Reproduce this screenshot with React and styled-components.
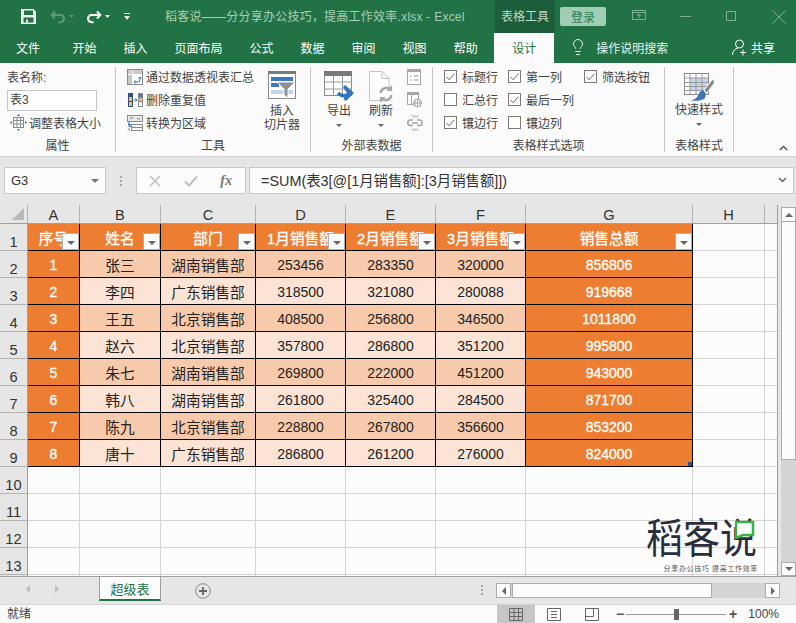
import React from 'react';
import styled, { createGlobalStyle } from 'styled-components';
import { Lightbulb } from 'lucide-react';

const GlobalStyle = createGlobalStyle`
  html, body {
    margin: 0;
    padding: 0;
    background: #e6e6e6;
  }
  * {
    box-sizing: border-box;
  }
`;

const uiFont = `"Liberation Sans", "Noto Sans CJK SC", sans-serif`;

const Window = styled.div`
  width: 796px;
  height: 623px;
  display: flex;
  flex-direction: column;
  overflow: hidden;
  background: #e6e6e6;
  font-family: ${uiFont};
  font-size: 12px;
  color: #444;
`;

/* title bar */
const TitleBar = styled.div`
  height: 33px;
  display: flex;
  align-items: center;
  background: #217346;
  color: #a9cfba;
  padding-left: 21px;
`;

const QuickIcon = styled.svg`
  display: block;
  flex: none;
  margin-right: ${p => p.$mr || 0}px;
`;

const TitleText = styled.div`
  width: 330px;
  margin-left: 35px;
  padding-bottom: 2px;
  white-space: nowrap;
  letter-spacing: 0.02em;
`;

const ContextTab = styled.div`
  width: 60px;
  height: 33px;
  padding-bottom: 2px;
  display: flex;
  align-items: center;
  justify-content: center;
  background: #1b5e39;
  color: #bcd8c8;
`;

const SignIn = styled.div`
  width: 46px;
  height: 19px;
  margin-left: 5px;
  margin-right: 26px;
  display: flex;
  align-items: center;
  justify-content: center;
  background: #a0cdb3;
  border-radius: 2px;
  color: #2f7d55;
`;

/* tab row */
const TabBar = styled.div`
  height: 30px;
  display: flex;
  align-items: center;
  background: #217346;
  color: #fff;
  padding: 0 0 2px 16px;
`;

const Tab = styled.div`
  padding: 0 13.5px;
  white-space: nowrap;
  &:first-child {
    padding: 0 19px 0 0;
  }
`;

const ActiveTab = styled.div`
  width: 60px;
  height: 30px;
  margin: 0 0 -2px 3px;
  display: flex;
  align-items: center;
  justify-content: center;
  background: #fbfbfb;
  color: #217346;
  padding-bottom: 2px;
`;

const SearchHint = styled.div`
  margin-left: 15px;
  display: flex;
  align-items: center;
  gap: 9px;
  color: #e8f1ec;
`;

const Share = styled.div`
  margin-left: auto;
  margin-right: 21px;
  display: flex;
  align-items: center;
  gap: 4px;
`;

/* ribbon */
const Ribbon = styled.div`
  height: 94px;
  display: flex;
  background: #fbfbfb;
  border-bottom: 1px solid #d2d2d2;
  position: relative;
`;

const Group = styled.div`
  width: ${p => p.$w}px;
  height: 93px;
  flex: none;
  display: flex;
  flex-direction: column;
`;

const GroupBody = styled.div`
  height: 73px;
  padding: 2px 0 0 ${p => p.$pl || 0}px;
  display: flex;
`;

const GroupLabel = styled.div`
  height: 20px;
  line-height: 20px;
  text-align: center;
  white-space: nowrap;
  color: #444;
`;

const Separator = styled.div`
  width: 1px;
  height: 85px;
  margin-top: 4px;
  flex: none;
  background: #c6c6c6;
`;

const Stack = styled.div`
  display: flex;
  flex-direction: column;
`;

const ToolRow = styled.div`
  height: 23px;
  display: flex;
  align-items: center;
  gap: ${p => p.$gap || 3}px;
  padding-left: ${p => p.$pl || 0}px;
  white-space: nowrap;
`;

const NameInput = styled.div`
  width: 90px;
  height: 21px;
  margin-top: 2px;
  padding-left: 2px;
  line-height: 19px;
  border: 1px solid #c6c6c6;
  background: #fff;
`;

const LargeButton = styled.div`
  width: ${p => p.$w || 42}px;
  margin-left: ${p => p.$ml || 0}px;
  display: flex;
  flex-direction: column;
  align-items: center;
  padding-top: ${p => p.$pt || 6}px;
  flex: none;
  line-height: 14px;
  white-space: nowrap;
  text-align: center;
`;

const LargeText = styled.div`
  margin-top: ${p => p.$mt || 2}px;
`;

const Caret = styled.div`
  width: 0;
  height: 0;
  margin-top: ${p => p.$mt || 6}px;
  border-left: 3px solid transparent;
  border-right: 3px solid transparent;
  border-top: 3px solid #666;
`;

const SmallIcons = styled.div`
  margin-left: 5px;
  display: flex;
  flex-direction: column;
`;

const SmallIconCell = styled.div`
  height: 23px;
  display: flex;
  align-items: center;
`;

const OptionGrid = styled.div`
  display: grid;
  grid-template-columns: 64px 76px auto;
  grid-auto-rows: 23px;
`;

const Option = styled.div`
  display: flex;
  align-items: center;
  gap: 5px;
  white-space: nowrap;
`;

const Box = styled.div`
  width: 13px;
  height: 13px;
  flex: none;
  border: 1px solid #7a7a7a;
  background: #fff;
  display: flex;
  align-items: center;
  justify-content: center;
`;

const CollapseIcon = styled.svg`
  position: absolute;
  right: 8px;
  bottom: 5px;
`;

/* formula bar */
const FormulaBand = styled.div`
  height: 48px;
  padding: 10px 2px 0 4px;
  display: flex;
  align-items: flex-start;
  flex: none;
`;

const NameBox = styled.div`
  width: 102px;
  height: 27px;
  padding: 0 6px 0 6px;
  display: flex;
  align-items: center;
  justify-content: space-between;
  background: #fcfcfc;
  border: 1px solid #c8c8c8;
  color: #333;
  font-size: 13px;
`;

const GripDots = styled.div`
  width: 30px;
  height: 27px;
  display: flex;
  align-items: center;
  justify-content: center;
`;

const Dots = styled.div`
  width: 2px;
  height: ${p => p.$h || 10}px;
  background-image: linear-gradient(#a8a8a8 50%, transparent 50%);
  background-size: 2px 4px;
`;

const FxBox = styled.div`
  width: 110px;
  height: 27px;
  padding: 0 13px 0 12px;
  display: flex;
  align-items: center;
  justify-content: space-between;
  background: #fcfcfc;
  border: 1px solid #c8c8c8;
`;

const FxMark = styled.span`
  font-family: "Liberation Serif", serif;
  font-style: italic;
  font-weight: bold;
  font-size: 14px;
  color: #777;
`;

const FormulaInput = styled.div`
  flex: 1;
  height: 27px;
  margin-left: 3px;
  padding: 0 6px 2px 11px;
  display: flex;
  align-items: center;
  justify-content: space-between;
  background: #fcfcfc;
  border: 1px solid #c8c8c8;
  font-size: 14.4px;
  color: #333;
`;

/* sheet */
const SheetArea = styled.div`
  height: 371px;
  display: flex;
  flex: none;
  position: relative;
`;

const SheetGrid = styled.div`
  width: 778px;
  height: 371px;
  flex: none;
  display: grid;
  grid-template-columns: 28px 52px 81px 95px 90px 90px 90px 167px 72px 13px;
  grid-template-rows: 19px repeat(14, 27px);
  overflow: hidden;
  border-right: 1px solid #9e9e9e;
`;

const Corner = styled.div`
  border-right: 1px solid #b4b4b4;
  border-bottom: 1px solid #9e9e9e;
  display: flex;
  align-items: flex-end;
  justify-content: flex-end;
  padding: 0 3px 3px 0;
`;

const ColHead = styled.div`
  border-right: 1px solid #b4b4b4;
  border-bottom: 1px solid #9e9e9e;
  display: flex;
  align-items: flex-end;
  justify-content: center;
  font-size: 14.67px;
  line-height: 15px;
  color: #333;
`;

const RowHead = styled.div`
  border-right: 1px solid #9e9e9e;
  border-bottom: 1px solid #b4b4b4;
  display: flex;
  align-items: flex-end;
  justify-content: center;
  font-size: 14.67px;
  line-height: 16px;
  color: #333;
`;

const cellBackground = {
  head: '#ed7d31',
  accent: '#ed7d31',
  dark: '#f7caac',
  light: '#fbe4d5',
  blank: '#fcfcfc',
};

const Cell = styled.div`
  position: relative;
  overflow: hidden;
  display: flex;
  align-items: center;
  justify-content: center;
  white-space: nowrap;
  background: ${p => cellBackground[p.$kind]};
  border-right: 1px solid ${p => (p.$kind === 'blank' ? '#d4d4d4' : '#000')};
  border-bottom: 1px solid ${p => (p.$kind === 'blank' ? '#d4d4d4' : '#000')};
  color: ${p => (p.$kind === 'dark' || p.$kind === 'light' ? '#222' : '#fff')};
  font-size: ${p => (p.$numeric ? 14 : 14.67)}px;
  -webkit-text-stroke: ${p => (p.$kind === 'head' || p.$kind === 'accent' ? '0.3px #fff' : '0')};
  padding-top: 1px;
`;

const FilterButton = styled.div`
  position: absolute;
  right: 0;
  bottom: 0;
  width: 17px;
  height: 17px;
  background: #fcfcfc;
  border: 1px solid #aab2ba;
  display: flex;
  flex-direction: column;
  align-items: center;
  justify-content: center;
`;

const FilterCaret = styled.div`
  width: 0;
  height: 0;
  margin-top: 2px;
  border-left: 4px solid transparent;
  border-right: 4px solid transparent;
  border-top: 4px solid #666;
`;

const ResizeHandle = styled.div`
  position: absolute;
  right: 0;
  bottom: 0;
  width: 4px;
  height: 4px;
  background: #2f4f9e;
`;

const Logo = styled.div`
  position: absolute;
  right: 38px;
  bottom: 3px;
  width: 112px;
  display: flex;
  flex-direction: column;
  align-items: flex-end;
  color: #2a2e3c;
`;

const LogoName = styled.div`
  width: 112px;
  height: 42px;
  line-height: 42px;
  font-size: 37px;
  font-weight: 400;
  white-space: nowrap;
  transform: scaleY(1.12);
  transform-origin: top;
`;

const LogoMark = styled.svg`
  position: absolute;
  right: 3px;
  top: 4px;
`;

const LogoSlogan = styled.div`
  margin-top: 6px;
  font-size: 7px;
  line-height: 9px;
  letter-spacing: 0.65px;
  white-space: nowrap;
  color: #555;
`;

/* scrollbars */
const VScroll = styled.div`
  width: 15px;
  margin: 2px 0 0 3px;
  flex: none;
  display: flex;
  flex-direction: column;
  background: #d4d4d4;
`;

const ScrollButton = styled.div`
  width: ${p => p.$w || 15}px;
  height: ${p => p.$h || 15}px;
  flex: none;
  display: flex;
  align-items: center;
  justify-content: center;
  background: #fcfcfc;
  border: 1px solid #ababab;
`;

const VThumb = styled.div`
  height: 238px;
  flex: none;
  background: #fcfcfc;
  border: 1px solid #ababab;
  border-top: none;
`;

const Arrow = styled.div`
  width: 0;
  height: 0;
  border-style: solid;
  border-color: transparent;
  border-width: ${p => p.$size || 4}px;
  ${p => `border-${p.$dir}-color: ${p.$color || '#666'};`}
  ${p => `border-${{ top: 'bottom', bottom: 'top', left: 'right', right: 'left' }[p.$dir]}-width: 0;`}
`;

const VSpacer = styled.div`
  flex: 1;
`;

/* sheet tabs */
const TabStrip = styled.div`
  height: 28px;
  flex: none;
  display: flex;
  border-top: 1px solid #9e9e9e;
`;

const NavArrows = styled.div`
  width: 99px;
  height: 24px;
  padding-left: 26px;
  display: flex;
  align-items: center;
  gap: 25px;
`;

const SheetTab = styled.div`
  width: 62px;
  height: 24px;
  display: flex;
  align-items: center;
  justify-content: center;
  background: #fcfcfc;
  border-left: 1px solid #9e9e9e;
  border-right: 1px solid #9e9e9e;
  border-bottom: 2px solid #217346;
  color: #217346;
  font-size: 13px;
`;

const AddSheet = styled.svg`
  margin: 6px 0 0 34px;
  flex: none;
`;

const HGrip = styled.div`
  margin: 8px 13px 0 auto;
`;

const HScroll = styled.div`
  margin: 6px 16px 0 0;
  width: 284px;
  height: 15px;
  display: flex;
  background: #d4d4d4;
`;

const HThumb = styled.div`
  width: 200px;
  height: 15px;
  background: #fcfcfc;
  border: 1px solid #ababab;
  margin-left: 1px;
`;

/* status bar */
const StatusBar = styled.div`
  flex: 1;
  display: flex;
  align-items: stretch;
  background: #fbfbfb;
  border-top: 1px solid #d4d4d4;
  padding: 0 17px 0 7px;
`;

const StatusText = styled.div`
  width: 490px;
  line-height: 18px;
`;

const ViewButton = styled.div`
  width: 38px;
  display: flex;
  align-items: center;
  justify-content: center;
  background: ${p => (p.$active ? '#c6c6c6' : 'transparent')};
`;

const ZoomControls = styled.div`
  width: 122px;
  margin-left: 5px;
  display: flex;
  align-items: center;
`;

const ZoomSign = styled.div`
  width: 8px;
  font-size: 14px;
  font-weight: bold;
  line-height: 18px;
  text-align: center;
  color: #555;
`;

const ZoomTrack = styled.div`
  position: relative;
  width: 100px;
  height: 1px;
  margin: 0 3px 0 2px;
  background: #9a9a9a;
`;

const ZoomThumb = styled.div`
  position: absolute;
  left: 48px;
  top: -5px;
  width: 5px;
  height: 11px;
  background: #666;
`;

const ZoomValue = styled.div`
  margin-left: auto;
  line-height: 18px;
  color: #444;
`;

/* icons */
const Save = () => (
  <QuickIcon width="15" height="15" viewBox="0 0 15 15" $mr={14}>
    <path fill="#eee" fillRule="evenodd" d="M0 0h12.5L15 2.5V15H0zM3 1.5v4.5h9V1.5zM2.5 8.500V13.500h10V8.500z" />
    <rect x="5" y="10.500" width="2" height="3" fill="#eee" />
  </QuickIcon>
);

const Undo = ({ color, flip, mr }) => (
  <QuickIcon width="16" height="14" viewBox="0 0 16 14" $mr={mr} style={flip ? { transform: 'scaleX(-1)' } : undefined}>
    <path fill="none" stroke={color} strokeWidth="2.200" d="M5 1.500 1.800 5 5 8.500M2.500 5H10a3.500 3.500 0 0 1 .8 7L8.500 12.500" />
  </QuickIcon>
);

const SmallDrop = ({ color, mr }) => (
  <QuickIcon width="5" height="3" viewBox="0 0 5 3" $mr={mr}>
    <path d="M0 0h5L2.500 3z" fill={color} />
  </QuickIcon>
);

const Customize = () => (
  <QuickIcon width="6" height="7" viewBox="0 0 6 7">
    <path d="M0 0h6v1H0zM0 3h6L3 7z" fill="#eee" />
  </QuickIcon>
);

const WindowIcons = () => (
  <svg width="156" height="16" viewBox="0 0 156 16" fill="none" stroke="#7fae94">
    <path d="M.5 1.500h13v9H.5zM.5 3.500h13M7 9V5M5 7l2-2 2 2" />
    <path d="M48 7.500h11" />
    <path d="M94.500 2.500h9v9h-9z" />
    <path d="M140.500 1.500l13 13M153.500 1.500l-13 13" />
  </svg>
);

const Person = () => (
  <svg width="15" height="17" viewBox="0 0 15 17" fill="none" stroke="#fff">
    <circle cx="7.500" cy="5" r="4" />
    <path d="M.5 16c0-4 2.500-6.500 5.500-7M11 10.500v6M8 13.500h6" />
  </svg>
);

const Pivot = () => (
  <svg width="16" height="16" viewBox="0 0 16 16" fill="none">
    <rect x=".5" y=".5" width="15" height="15" stroke="#8a8a8a" fill="#fff" />
    <path d="M1 1h4v4H1zM6 1h9v4H6zM1 6h4v9H1z" fill="#c9c9c9" />
    <path d="M7 13h4a2 2 0 0 0 2-2V8M11.500 9.500 13 8l1.500 1.500M8.500 11.500 7 13l1.500 1.500" stroke="#2f6fb5" />
  </svg>
);

const RemoveDup = () => (
  <svg width="16" height="16" viewBox="0 0 16 16">
    <rect x="1" y="1" width="5" height="14" fill="#2f4f7f" />
    <rect x="2" y="5" width="3" height="4" fill="#f3b779" />
    <rect x="2" y="10" width="3" height="4" fill="#f3b779" />
    <rect x="11" y="1" width="5" height="14" fill="#888" />
    <rect x="12" y="2" width="3" height="3" fill="#3f7cc0" />
    <rect x="12" y="6" width="3" height="3" fill="#f3b779" />
    <rect x="12" y="10" width="3" height="4" fill="#fff" />
    <path d="M7 8h2.500M8.500 6.500 10 8l-1.500 1.500" stroke="#2f6fb5" fill="none" />
  </svg>
);

const ToRange = () => (
  <svg width="16" height="16" viewBox="0 0 16 16" fill="none">
    <rect x=".5" y=".5" width="15" height="6" stroke="#8a8a8a" fill="#e8e8e8" />
    <path d="M3 3h3M10 3l1.500 1.500L13 3" stroke="#777" />
    <rect x="4.500" y="9.500" width="11" height="6" stroke="#8a8a8a" fill="#fff" />
    <path d="M4.500 12.500h11" stroke="#8a8a8a" />
    <path d="M2 7v4.500h2M.8 13.500 3 15.500M1 9.500h3" stroke="#2f6fb5" />
  </svg>
);

const Resize = () => (
  <svg width="17" height="17" viewBox="0 0 17 17" fill="none">
    <rect x="3.500" y="3.500" width="10" height="10" stroke="#8a8a8a" fill="#fff" />
    <path d="M3.500 6.500h10M3.500 10h10M7 3.500v10M10.500 3.500v10" stroke="#8a8a8a" />
    <path d="M8.500 0 7 2h3zM8.500 17 7 15h3zM0 8.500 2 7v3zM17 8.500 15 7v3z" fill="#2f6fb5" />
  </svg>
);

const Slicer = () => (
  <svg width="28" height="28" viewBox="0 0 28 28">
    <rect x=".5" y=".5" width="27" height="27" fill="#fff" stroke="#8a8a8a" />
    <rect x="0" y="0" width="28" height="3" fill="#7a7a7a" />
    <rect x="3" y="6" width="22" height="4" fill="#3f77b8" />
    <rect x="3" y="12" width="8" height="4" fill="#3f77b8" />
    <rect x="3" y="19" width="22" height="4" fill="#c5d6ea" />
    <path d="M9 11h18l-7 7v9l-4-3v-6z" fill="#8f8f8f" stroke="#fff" />
  </svg>
);

const ExportIcon = () => (
  <svg width="31" height="31" viewBox="0 0 31 31" fill="none">
    <rect x=".5" y=".5" width="27" height="24" fill="#fff" stroke="#8a8a8a" />
    <rect x="0" y="0" width="28" height="5" fill="#7a7a7a" />
    <path d="M.5 11h27M.5 18h27M9.500 5v20M18.500 5v20" stroke="#9a9a9a" />
    <path d="M14 22c4 4 8 3 11 1" stroke="#2f74c0" strokeWidth="3.500" />
    <path d="M21 14l9 8-8 8-2.500-2 3.500-6-4-6z" fill="#2f74c0" />
  </svg>
);

const RefreshIcon = () => (
  <svg width="24" height="31" viewBox="0 0 24 31" fill="none">
    <path d="M.5.5H13L20 7.500V29.500H.5z" fill="#fff" stroke="#c4c4c4" />
    <path d="M13 .5v7h7" stroke="#c4c4c4" />
    <circle cx="17" cy="23" r="7" fill="#fff" />
    <path d="M11.500 22a6 6 0 0 1 10-3.500M22.500 24a6 6 0 0 1-10 3.500" stroke="#a8a8a8" strokeWidth="2.500" />
    <path d="M23 14v6h-6zM11 32v-6h6z" fill="#a8a8a8" />
  </svg>
);

const PropsIcon = () => (
  <svg width="14" height="16" viewBox="0 0 14 16" fill="none" stroke="#a6a6a6">
    <rect x=".5" y=".5" width="13" height="15" fill="#fff" />
    <rect x="0" y="0" width="14" height="3" fill="#a6a6a6" stroke="none" />
    <path d="M3 7h1.500M7 7h4.500M3 11h1.500M7 11h4.500" stroke="#909090" />
  </svg>
);

const BrowserIcon = () => (
  <svg width="15" height="16" viewBox="0 0 15 16" fill="none" stroke="#a6a6a6">
    <rect x=".5" y=".5" width="11" height="12" fill="#fff" />
    <rect x="0" y="0" width="12" height="3" fill="#a6a6a6" stroke="none" />
    <path d="M4.500 3v9" />
    <circle cx="10.500" cy="11" r="4" fill="#fff" />
    <path d="M6.500 11h8M10.500 7v8M8.500 8.500c-1 2-1 3.500 0 5M12.500 8.500c1 2 1 3.500 0 5" />
  </svg>
);

const UnlinkIcon = () => (
  <svg width="16" height="16" viewBox="0 0 16 16" fill="none" stroke="#a6a6a6">
    <path d="M6 5H3.500a2.500 2.500 0 0 0 0 5.500H6M10 5h2.500a2.500 2.500 0 0 1 0 5.500H10" strokeWidth="1.500" />
    <path d="M5 8h6" strokeWidth="1.500" />
    <path d="M5 0l1.500 2.500M11 0 9.500 2.500M8 0v2.500M5 16l1.500-2.500M11 16l-1.500-2.500M8 16v-2.500" />
  </svg>
);

const QuickStyles = () => (
  <svg width="31" height="29" viewBox="0 0 31 29" fill="none">
    <rect x=".5" y=".5" width="24" height="21" fill="#fff" stroke="#8a8a8a" />
    <rect x="6" y="5" width="18" height="12" fill="#c5d6ea" />
    <path d="M.5 5h24M.5 9.500h24M.5 13.500h24M.5 17.500h24M6 .5v21M12 .5v21M18 .5v21" stroke="#9a9a9a" />
    <path d="M20 17 29.500 5l1 5L23 20z" fill="#8a8a8a" stroke="#fff" />
    <path d="M19 17.500c-3 0-4 3-5 5-1 2-3 4-7 5 6 1 14 0 14.500-4 .3-2.500 1-4-2.500-6z" fill="#3f77b8" />
  </svg>
);

const Tick = () => (
  <svg width="9" height="8" viewBox="0 0 9 8" fill="none">
    <path d="M.7 4 3.200 6.800 8.300.7" stroke="#666" />
  </svg>
);

const CheckOption = ({ on, children }) => (
  <Option>
    <Box>{on && <Tick />}</Box>
    {children}
  </Option>
);

const LabelledButton = ({ icon, text, w, pt, mt }) => (
  <LargeButton $w={w} $pt={pt}>
    {icon}
    <LargeText $mt={mt}>{text}</LargeText>
    <Caret />
  </LargeButton>
);

const NormalView = () => (
  <svg width="14" height="13" viewBox="0 0 14 13" fill="none" stroke="#666">
    <path d="M.5.5h13v12H.5zM.5 4.500h13M.5 8.500h13M5 .5v12M9.500.5v12" />
  </svg>
);

const LayoutView = () => (
  <svg width="14" height="13" viewBox="0 0 14 13" fill="none" stroke="#666">
    <path d="M.5.5h13v12H.5zM4 3.500h6M4 6.500h6M4 9.500h6" />
  </svg>
);

const BreakView = () => (
  <svg width="14" height="13" viewBox="0 0 14 13" fill="none" stroke="#666">
    <path d="M.5 12.500V.5h13v12zM.5 8.500h8M8.500.5v8" />
  </svg>
);

/* sheet data */
const columns = ['A', 'B', 'C', 'D', 'E', 'F', 'G', 'H', ''];

const headers = ['序号', '姓名', '部门', '1月销售额', '2月销售额', '3月销售额', '销售总额'];

const sales = [
  ['1', '张三', '湖南销售部', '253456', '283350', '320000', '856806'],
  ['2', '李四', '广东销售部', '318500', '321080', '280088', '919668'],
  ['3', '王五', '北京销售部', '408500', '256800', '346500', '1011800'],
  ['4', '赵六', '北京销售部', '357800', '286800', '351200', '995800'],
  ['5', '朱七', '湖南销售部', '269800', '222000', '451200', '943000'],
  ['6', '韩八', '湖南销售部', '261800', '325400', '284500', '871700'],
  ['7', '陈九', '北京销售部', '228800', '267800', '356600', '853200'],
  ['8', '唐十', '广东销售部', '286800', '261200', '276000', '824000'],
];

const blankRows = [10, 11, 12, 13, ''];

const Sheet = () => (
  <SheetGrid>
    <Corner>
      <svg width="12" height="12" viewBox="0 0 12 12">
        <path d="M12 0v12H0z" fill="#b8b8b8" />
      </svg>
    </Corner>
    {columns.map((col, i) => (
      <ColHead key={i}>{col}</ColHead>
    ))}

    <RowHead>1</RowHead>
    {headers.map(text => (
      <Cell key={text} $kind="head">
        {text}
        <FilterButton>
          <FilterCaret />
        </FilterButton>
      </Cell>
    ))}
    <Cell $kind="blank" />
    <Cell $kind="blank" />

    {sales.map((row, r) => (
      <React.Fragment key={row[0]}>
        <RowHead>{r + 2}</RowHead>
        {row.map((value, c) => {
          const accent = c === 0 || c === 6;
          return (
            <Cell
              key={c}
              $kind={accent ? 'accent' : r % 2 === 0 ? 'dark' : 'light'}
              $numeric={c === 0 || c > 2}
            >
              {value}
              {c === 6 && r === 7 && <ResizeHandle />}
            </Cell>
          );
        })}
        <Cell $kind="blank" />
        <Cell $kind="blank" />
      </React.Fragment>
    ))}

    {blankRows.map((num, r) => (
      <React.Fragment key={r}>
        <RowHead>{num}</RowHead>
        {columns.map((_, c) => (
          <Cell key={c} $kind="blank" />
        ))}
      </React.Fragment>
    ))}
  </SheetGrid>
);

const App = () => (
  <Window>
    <GlobalStyle />

    <TitleBar>
      <Save />
      <Undo color="#5c9878" mr={3} />
      <SmallDrop color="#5c9878" mr={12} />
      <Undo color="#f2f2f2" flip mr={3} />
      <SmallDrop color="#f2f2f2" mr={14} />
      <Customize />
      <TitleText>稻客说——分分享办公技巧，提高工作效率.xlsx  -  Excel</TitleText>
      <ContextTab>表格工具</ContextTab>
      <SignIn>登录</SignIn>
      <WindowIcons />
    </TitleBar>

    <TabBar>
      <Tab>文件</Tab>
      <Tab>开始</Tab>
      <Tab>插入</Tab>
      <Tab>页面布局</Tab>
      <Tab>公式</Tab>
      <Tab>数据</Tab>
      <Tab>审阅</Tab>
      <Tab>视图</Tab>
      <Tab>帮助</Tab>
      <ActiveTab>设计</ActiveTab>
      <SearchHint>
        <Lightbulb size={18} strokeWidth={1.2} color="#fff" />
        操作说明搜索
      </SearchHint>
      <Share>
        <Person />
        共享
      </Share>
    </TabBar>

    <Ribbon>
      <Group $w={115}>
        <GroupBody $pl={7}>
          <Stack>
            <ToolRow>表名称:</ToolRow>
            <NameInput>表3</NameInput>
            <ToolRow $pl={3} $gap={2}>
              <Resize />
              调整表格大小
            </ToolRow>
          </Stack>
        </GroupBody>
        <GroupLabel>属性</GroupLabel>
      </Group>
      <Separator />

      <Group $w={194}>
        <GroupBody $pl={11}>
          <Stack>
            <ToolRow>
              <Pivot />
              通过数据透视表汇总
            </ToolRow>
            <ToolRow>
              <RemoveDup />
              删除重复值
            </ToolRow>
            <ToolRow>
              <ToRange />
              转换为区域
            </ToolRow>
          </Stack>
          <LargeButton $w={40} $ml={8}>
            <Slicer />
            <LargeText $mt={5}>插入<br />切片器</LargeText>
          </LargeButton>
        </GroupBody>
        <GroupLabel>工具</GroupLabel>
      </Group>
      <Separator />

      <Group $w={121}>
        <GroupBody $pl={7}>
          <LabelledButton icon={<ExportIcon />} text="导出" />
          <LabelledButton icon={<RefreshIcon />} text="刷新" />
          <SmallIcons>
            <SmallIconCell><PropsIcon /></SmallIconCell>
            <SmallIconCell><BrowserIcon /></SmallIconCell>
            <SmallIconCell><UnlinkIcon /></SmallIconCell>
          </SmallIcons>
        </GroupBody>
        <GroupLabel>外部表数据</GroupLabel>
      </Group>
      <Separator />

      <Group $w={231}>
        <GroupBody $pl={11}>
          <OptionGrid>
            <CheckOption on>标题行</CheckOption>
            <CheckOption on>第一列</CheckOption>
            <CheckOption on>筛选按钮</CheckOption>
            <CheckOption>汇总行</CheckOption>
            <CheckOption on>最后一列</CheckOption>
            <span />
            <CheckOption on>镶边行</CheckOption>
            <CheckOption>镶边列</CheckOption>
          </OptionGrid>
        </GroupBody>
        <GroupLabel>表格样式选项</GroupLabel>
      </Group>
      <Separator />

      <Group $w={68}>
        <GroupBody>
          <LabelledButton icon={<QuickStyles />} text="快速样式" w={68} pt={8} mt={1} />
        </GroupBody>
        <GroupLabel>表格样式</GroupLabel>
      </Group>
      <Separator />

      <CollapseIcon width="9" height="6" viewBox="0 0 9 6" fill="none">
        <path d="M.8 5 4.500 1.500 8.200 5" stroke="#555" strokeWidth="1.500" />
      </CollapseIcon>
    </Ribbon>

    <FormulaBand>
      <NameBox>
        G3
        <Arrow $dir="top" $size={4} $color="#777" />
      </NameBox>
      <GripDots><Dots /></GripDots>
      <FxBox>
        <svg width="12" height="12" viewBox="0 0 12 12" fill="none">
          <path d="M1 1l10 10M11 1 1 11" stroke="#c0c0c0" strokeWidth="1.500" />
        </svg>
        <svg width="14" height="12" viewBox="0 0 14 12" fill="none">
          <path d="M1 6.500 5 10.500 13 1.500" stroke="#c0c0c0" strokeWidth="2" />
        </svg>
        <FxMark>fx</FxMark>
      </FxBox>
      <FormulaInput>
        =SUM(表3[@[1月销售额]:[3月销售额]])
        <svg width="9" height="6" viewBox="0 0 9 6" fill="none">
          <path d="M1 1l3.500 3.500L8 1" stroke="#666" strokeWidth="1.500" />
        </svg>
      </FormulaInput>
    </FormulaBand>

    <SheetArea>
      <Sheet />
      <VScroll>
        <ScrollButton><Arrow $dir="bottom" $size={4} /></ScrollButton>
        <VThumb />
        <VSpacer />
        <ScrollButton $h={14}><Arrow $dir="top" $size={4} /></ScrollButton>
      </VScroll>
      <Logo>
        <LogoName>稻客说</LogoName>
        <LogoMark width="20" height="19" viewBox="0 0 20 19" fill="none">
          <path d="M1 2h17v13H8L1 18z" stroke="#3cb04a" strokeWidth="2.500" fill="#fcfcfc" />
        </LogoMark>
        <LogoSlogan>分享办公技巧 提高工作效率</LogoSlogan>
      </Logo>
    </SheetArea>

    <TabStrip>
      <NavArrows>
        <Arrow $dir="right" $size={4} $color="#bdbdbd" />
        <Arrow $dir="left" $size={4} $color="#bdbdbd" />
      </NavArrows>
      <SheetTab>超级表</SheetTab>
      <AddSheet width="16" height="16" viewBox="0 0 16 16" fill="none">
        <circle cx="8" cy="8" r="7.300" stroke="#888" />
        <path d="M8 4v8M4 8h8" stroke="#666" strokeWidth="1.800" />
      </AddSheet>
      <HGrip><Dots $h={10} /></HGrip>
      <HScroll>
        <ScrollButton><Arrow $dir="right" $size={4} /></ScrollButton>
        <HThumb />
        <VSpacer />
        <ScrollButton><Arrow $dir="left" $size={4} /></ScrollButton>
      </HScroll>
    </TabStrip>

    <StatusBar>
      <StatusText>就绪</StatusText>
      <ViewButton $active><NormalView /></ViewButton>
      <ViewButton><LayoutView /></ViewButton>
      <ViewButton><BreakView /></ViewButton>
      <ZoomControls>
        <ZoomSign>−</ZoomSign>
        <ZoomTrack><ZoomThumb /></ZoomTrack>
        <ZoomSign>+</ZoomSign>
      </ZoomControls>
      <ZoomValue>100%</ZoomValue>
    </StatusBar>
  </Window>
);

export default App;
